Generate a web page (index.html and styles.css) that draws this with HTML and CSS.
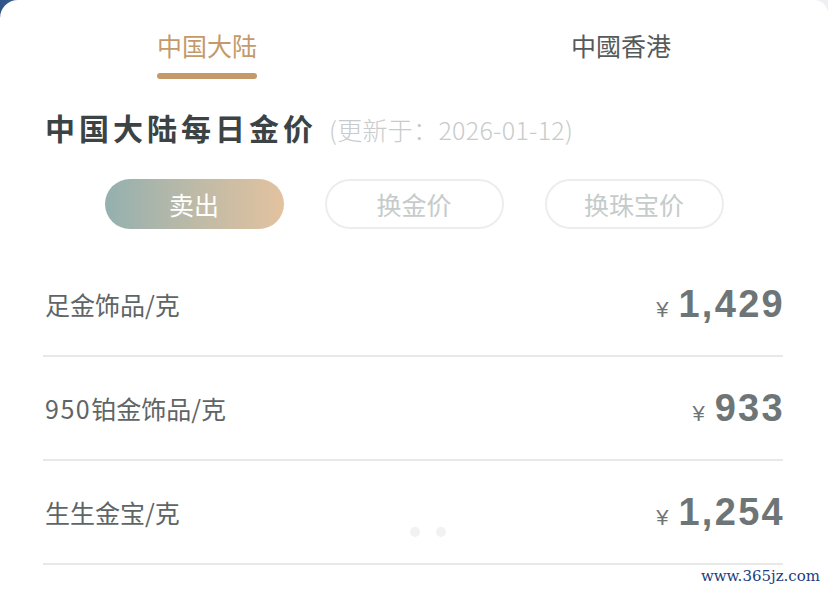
FILE: index.html
```html
<!DOCTYPE html>
<html lang="zh-CN">
<head>
<meta charset="utf-8">
<title>中国大陆每日金价</title>
<link rel="stylesheet" href="styles.css">
</head>
<body>
<div class="card">
  <div class="tabs">
    <div class="tab tab-active"><span class="tab-label">中国大陆</span><span class="tab-bar"></span></div>
    <div class="tab"><span class="tab-label">中國香港</span></div>
  </div>
  <div class="heading">
    <h1 class="title">中国大陆每日金价</h1>
    <span class="updated">(更新于：2026-01-12)</span>
  </div>
  <div class="pills">
    <div class="pill pill-active">卖出</div>
    <div class="pill">换金价</div>
    <div class="pill">换珠宝价</div>
  </div>
  <div class="list">
    <div class="row"><span class="name">足金饰品/克</span><span class="price"><span class="yen">¥</span><span class="num">1,429</span></span></div>
    <div class="row"><span class="name"><span class="digits">950</span>铂金饰品/克</span><span class="price"><span class="yen">¥</span><span class="num">933</span></span></div>
    <div class="row"><span class="name">生生金宝/克</span><span class="price"><span class="yen">¥</span><span class="num">1,254</span></span></div>
    <div class="dots"><span class="dot"></span><span class="dot"></span></div>
  </div>
  <div class="watermark">www.365jz.com</div>
</div>
</body>
</html>
```
FILE: styles.css
```css
html, body {
  margin: 0;
  padding: 0;
}
body {
  width: 828px;
  height: 594px;
  overflow: hidden;
  background: linear-gradient(90deg, #2f5488 0%, #c9d3df 30%, #eef0f3 100%);
  font-family: "Noto Sans CJK SC", "Noto Sans", sans-serif;
}
.card {
  position: relative;
  height: 594px;
  background: #ffffff;
  border-radius: 18px 14px 0 0;
}
.tabs {
  display: flex;
  height: 80px;
}
.tab {
  flex: 1;
  display: flex;
  flex-direction: column;
  align-items: center;
  padding-top: 28px;
  box-sizing: border-box;
}
.tab-label {
  font-size: 25px;
  line-height: 34px;
  color: #555a5a;
}
.tab-active .tab-label {
  color: #c39a6c;
}
.tab-bar {
  display: block;
  width: 100px;
  height: 6px;
  margin-top: 11px;
  border-radius: 3px;
  background: #c6996b;
}
.heading {
  display: flex;
  align-items: baseline;
  padding: 26px 0 0 45px;
  height: 70px;
  box-sizing: border-box;
}
.title {
  margin: 0;
  font-size: 30px;
  font-weight: 700;
  letter-spacing: 4px;
  line-height: 42px;
  color: #3b4344;
}
.updated {
  margin-left: 12px;
  font-size: 25px;
  letter-spacing: 0.3px;
  color: #c7cbcb;
  font-weight: 300;
}
.pills {
  display: flex;
  justify-content: center;
  gap: 41px;
  padding-top: 29px;
}
.pill {
  width: 179px;
  height: 50px;
  box-sizing: border-box;
  border-radius: 25px;
  border: 2px solid #eceeee;
  display: flex;
  align-items: center;
  justify-content: center;
  font-size: 25px;
  color: #c5cbcb;
}
.pill-active {
  border: none;
  color: #ffffff;
  background: linear-gradient(90deg, #94b0af 0%, #bdbaa7 50%, #e3c29f 100%);
}
.list {
  position: relative;
  margin: 24px 45px 0 43px;
}
.row {
  display: flex;
  align-items: center;
  justify-content: space-between;
  height: 102px;
  border-bottom: 2px solid #e8e8e8;
  padding-left: 2px;
}
.name {
  font-size: 25px;
  color: #5e6566;
}
.digits {
  letter-spacing: 1.5px;
}
.price {
  display: flex;
  align-items: baseline;
  color: #6e7576;
}
.yen {
  font-family: "Liberation Sans", Arial, sans-serif;
  font-size: 22px;
  margin-right: 10px;
}
.num {
  font-family: "Liberation Sans", Arial, sans-serif;
  font-size: 38px;
  font-weight: 700;
  letter-spacing: 2.3px;
  margin-right: -2px;
}
.dots {
  position: absolute;
  left: 367px;
  top: 274px;
  display: flex;
  gap: 16px;
}
.dot {
  width: 10px;
  height: 10px;
  border-radius: 50%;
  background: #f1f2f3;
}
.watermark {
  position: absolute;
  right: 8px;
  bottom: 9px;
  font-family: "DejaVu Serif", serif;
  font-size: 15px;
  color: #1d3c80;
}
```
